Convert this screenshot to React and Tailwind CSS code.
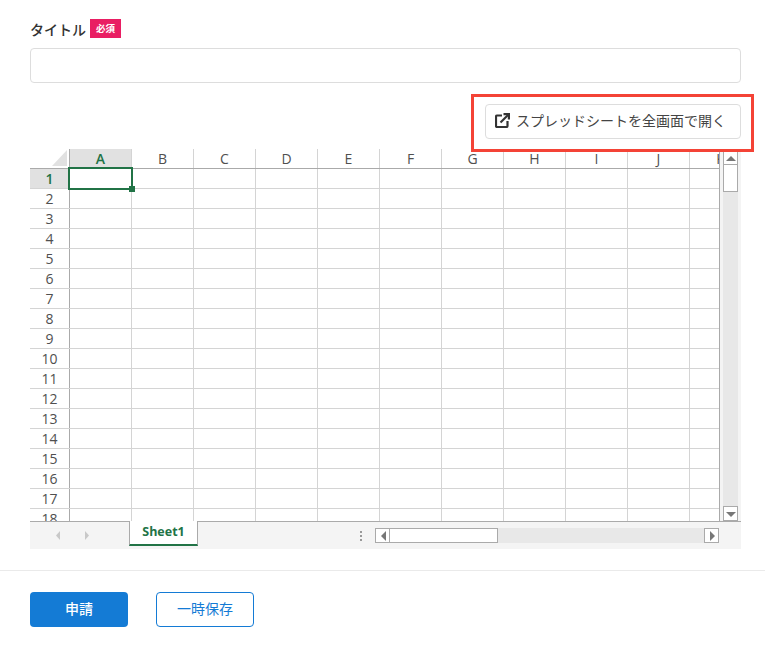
import React from "react";

const cols = ["A", "B", "C", "D", "E", "F", "G", "H", "I", "J", "K"];
const rows = Array.from({ length: 18 }, (_, i) => i + 1);
const jp = "font-['Noto_Sans_CJK_JP','Noto_Sans',sans-serif]";
const sheetFont = "font-['Open_Sans','Noto_Sans',sans-serif]";

function Triangle({ dir }) {
  const points = {
    up: "0,6 5,1 10,6",
    down: "0,1 10,1 5,6",
    left: "6,0 6,10 1,5",
    right: "1,0 1,10 6,5",
  };
  return (
    <svg width="10" height="10" viewBox="0 0 10 10" className="text-[#777]">
      <polygon points={points[dir]} fill="currentColor" transform={dir === "up" || dir === "down" ? "translate(0 2)" : "translate(2 0)"} />
    </svg>
  );
}

function ScrollBtn({ dir, className = "" }) {
  return (
    <div className={`w-[15px] h-[15px] shrink-0 bg-white border border-[#aaa] flex items-center justify-center ${className}`}>
      <Triangle dir={dir} />
    </div>
  );
}

function OpenIcon() {
  return (
    <svg width="15" height="15" viewBox="0 0 15 15" fill="none" stroke="#333" strokeWidth="2.200" className="shrink-0">
      <path d="M7 2.500H2a1 1 0 0 0-1 1V13a1 1 0 0 0 1 1h9.500a1 1 0 0 0 1-1V8" />
      <path d="M5.500 9.500 13.500 1.500" />
      <path d="M8.500 1.100h5.400v5.400" />
    </svg>
  );
}

function Grid() {
  return (
    <div className={`relative h-[372px] w-[690px] overflow-hidden border-r border-[#aaa] text-[14px] text-[#505050] ${sheetFont}`}>
      {/* header row */}
      <div className="flex h-5 border-b border-[#aaa]">
        <div className="w-10 shrink-0 border-r border-[#aaa] relative">
          <svg width="16" height="16" viewBox="0 0 16 16" className="absolute left-[22px] top-[1px]">
            <polygon points="0,16 15,0 15,16" fill="#e1e1e1" />
          </svg>
        </div>
        {cols.map((c, i) => (
          <div
            key={c}
            className={`w-[62px] shrink-0 border-r border-[#d4d4d4] flex items-center justify-center leading-none ${
              i === 0 ? "bg-[#e1e1e1] font-semibold text-[#217346]" : ""
            }`}
          >
            {c}
          </div>
        ))}
      </div>
      {rows.map((r) => (
        <div key={r} className="flex h-5 border-b border-[#d4d4d4]">
          <div
            className={`w-10 shrink-0 border-r border-[#aaa] flex items-center justify-center leading-none ${
              r === 1 ? "bg-[#e1e1e1] font-semibold text-[#217346]" : ""
            }`}
          >
            {r}
          </div>
          {cols.map((c) => (
            <div key={c} className="w-[62px] shrink-0 border-r border-[#d4d4d4]" />
          ))}
        </div>
      ))}
      {/* selected cell */}
      <div className="absolute left-[38px] top-[18px] w-[65px] h-[23px] border-2 border-[#217346]" />
      <div className="absolute left-[99px] top-[37px] w-[6px] h-[6px] bg-[#217346]" />
    </div>
  );
}

function VScroll() {
  return (
    <div className="w-[21px] h-[372px] bg-[#f4f4f4] pl-[3px] pr-[3px] pt-px">
      <div className="w-[15px] h-full bg-[#e8e8e8] flex flex-col">
        <ScrollBtn dir="up" />
        <div className="w-[15px] h-[28px] -mt-px bg-white border border-[#aaa]" />
        <ScrollBtn dir="down" className="mt-auto" />
      </div>
    </div>
  );
}

function TabBar() {
  return (
    <div className="h-[28px] bg-[#f4f4f4] border-t border-[#aaa] flex items-start relative">
      <div className="w-[99px] h-[27px] shrink-0 flex items-center pl-[25px] gap-[23px]">
        <svg width="6" height="9" viewBox="0 0 6 9"><polygon points="5,0 5,9 1,4.500" fill="#c8c8c8" /></svg>
        <svg width="6" height="9" viewBox="0 0 6 9"><polygon points="1,0 1,9 5,4.500" fill="#c8c8c8" /></svg>
      </div>
      <div className={`w-[69px] h-[25px] shrink-0 -mt-px bg-white border-x border-[#aaa] border-b-2 border-b-[#217346] text-[#217346] font-bold text-[12.5px] flex items-center justify-center ${sheetFont}`}>
        Sheet1
      </div>
      <div className="w-[177px] h-[27px] shrink-0 flex items-center justify-end pr-[13px]">
        <div className="flex flex-col gap-[2px]">
          <span className="w-[2px] h-[2px] bg-[#999]" />
          <span className="w-[2px] h-[2px] bg-[#999]" />
          <span className="w-[2px] h-[2px] bg-[#999]" />
        </div>
      </div>
      <div className="w-[344px] h-[15px] mt-[6px] bg-[#e8e8e8] flex">
        <ScrollBtn dir="left" />
        <div className="w-[109px] h-[15px] -ml-px bg-white border border-[#aaa]" />
        <ScrollBtn dir="right" className="ml-auto" />
      </div>
    </div>
  );
}

export default function App() {
  return (
    <div className={`w-[765px] h-[660px] bg-white relative overflow-hidden ${jp}`}>
      <div className="w-[711px] ml-[30px] pt-[19px]">
        <div className="flex items-center h-[19px] gap-1">
          <span className="text-[14px] font-medium text-[#333] leading-none">タイトル</span>
          <span className="w-[31px] h-[19px] bg-[#e91e63] text-white text-[9.5px] font-bold flex items-center justify-center leading-none">必須</span>
        </div>
        <input className="block mt-[10px] w-full h-[35px] border border-[#ddd] rounded bg-white" />
        <div className="flex justify-end mt-[21px]">
          <button className="h-[35px] w-[256px] border border-[#ddd] rounded bg-white flex items-center pl-[9px] gap-[6px] text-[14px] text-[#444] pb-[2px]">
            <OpenIcon />
            スプレッドシートを全画面で開く
          </button>
        </div>
        <div className="mt-[10px]">
          <div className="flex">
            <Grid />
            <VScroll />
          </div>
          <TabBar />
        </div>
      </div>
      <div className="mt-[21px] border-t border-[#eaeaea] pl-[30px] pt-[21px] flex gap-7">
        <button className="w-[98px] h-[35px] rounded bg-[#147bd5] text-white text-[14px] font-medium pb-[2px]">申請</button>
        <button className="w-[98px] h-[35px] rounded border border-[#147bd5] bg-white text-[#147bd5] text-[14px] pb-[2px]">一時保存</button>
      </div>
      {/* red annotation box */}
      <div className="absolute left-[471px] top-[94px] w-[283px] h-[58px] border-[3px] border-[#f44336] pointer-events-none" />
    </div>
  );
}
